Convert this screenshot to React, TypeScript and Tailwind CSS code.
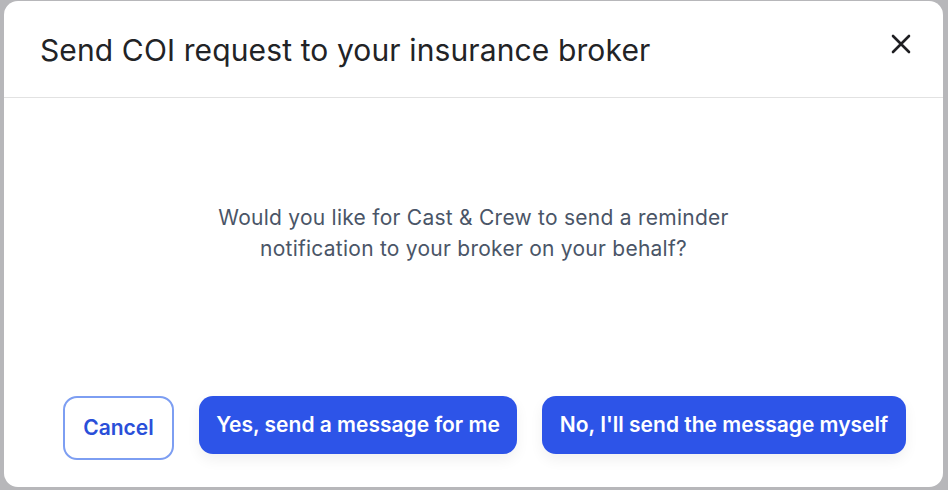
import React from "react";

export default function App() {
  return (
    <div
      className="w-[948px] h-[490px] bg-[#b7b7ba] pl-[4px] pt-[1px] overflow-hidden"
      style={{ fontFamily: "Inter, 'Noto Sans', sans-serif" }}
    >
      <div className="w-[939px] h-[486px] bg-white rounded-[14px] flex flex-col">
        <div className="h-[97px] border-b border-[#e2e2e2] flex items-center justify-between pl-[36px] pr-[30px]">
          <h2 className="text-[30px] leading-none text-[#222326] font-normal tracking-[0.12px] pt-[2px]">
            Send COI request to your insurance broker
          </h2>
          <button className="w-[24px] h-[24px] flex items-center justify-center text-[#1f1f22] -mt-[10px]">
            <svg width="20" height="20" viewBox="0 0 20 20" fill="none">
              <path d="M2 2L18 18M18 2L2 18" stroke="currentColor" strokeWidth="2.6" strokeLinecap="round" />
            </svg>
          </button>
        </div>
        <div className="flex-1 flex items-start justify-center pt-[104px]">
          <p className="text-[21px] leading-[31px] text-[#4a5567] text-center tracking-[0.25px] w-[580px]">
            Would you like for Cast &amp; Crew to send a reminder
            <br />
            notification to your broker on your behalf?
          </p>
        </div>
        <div className="flex items-start gap-[25px] pl-[59px] pb-[27px]">
          <button className="w-[111px] h-[64px] rounded-[14px] border-[2px] border-[#7d9ef2] text-[#2a4fd9] text-[21px] font-semibold bg-white">
            Cancel
          </button>
          <button className="h-[58px] w-[318px] rounded-[14px] bg-[#2d54e8] text-white text-[21px] font-semibold shadow-[0_6px_14px_rgba(0,0,0,0.06)]">
            Yes, send a message for me
          </button>
          <button className="h-[58px] w-[364px] rounded-[14px] bg-[#2d54e8] text-white text-[21px] font-semibold shadow-[0_6px_14px_rgba(0,0,0,0.06)]">
            No, I'll send the message myself
          </button>
        </div>
      </div>
    </div>
  );
}
